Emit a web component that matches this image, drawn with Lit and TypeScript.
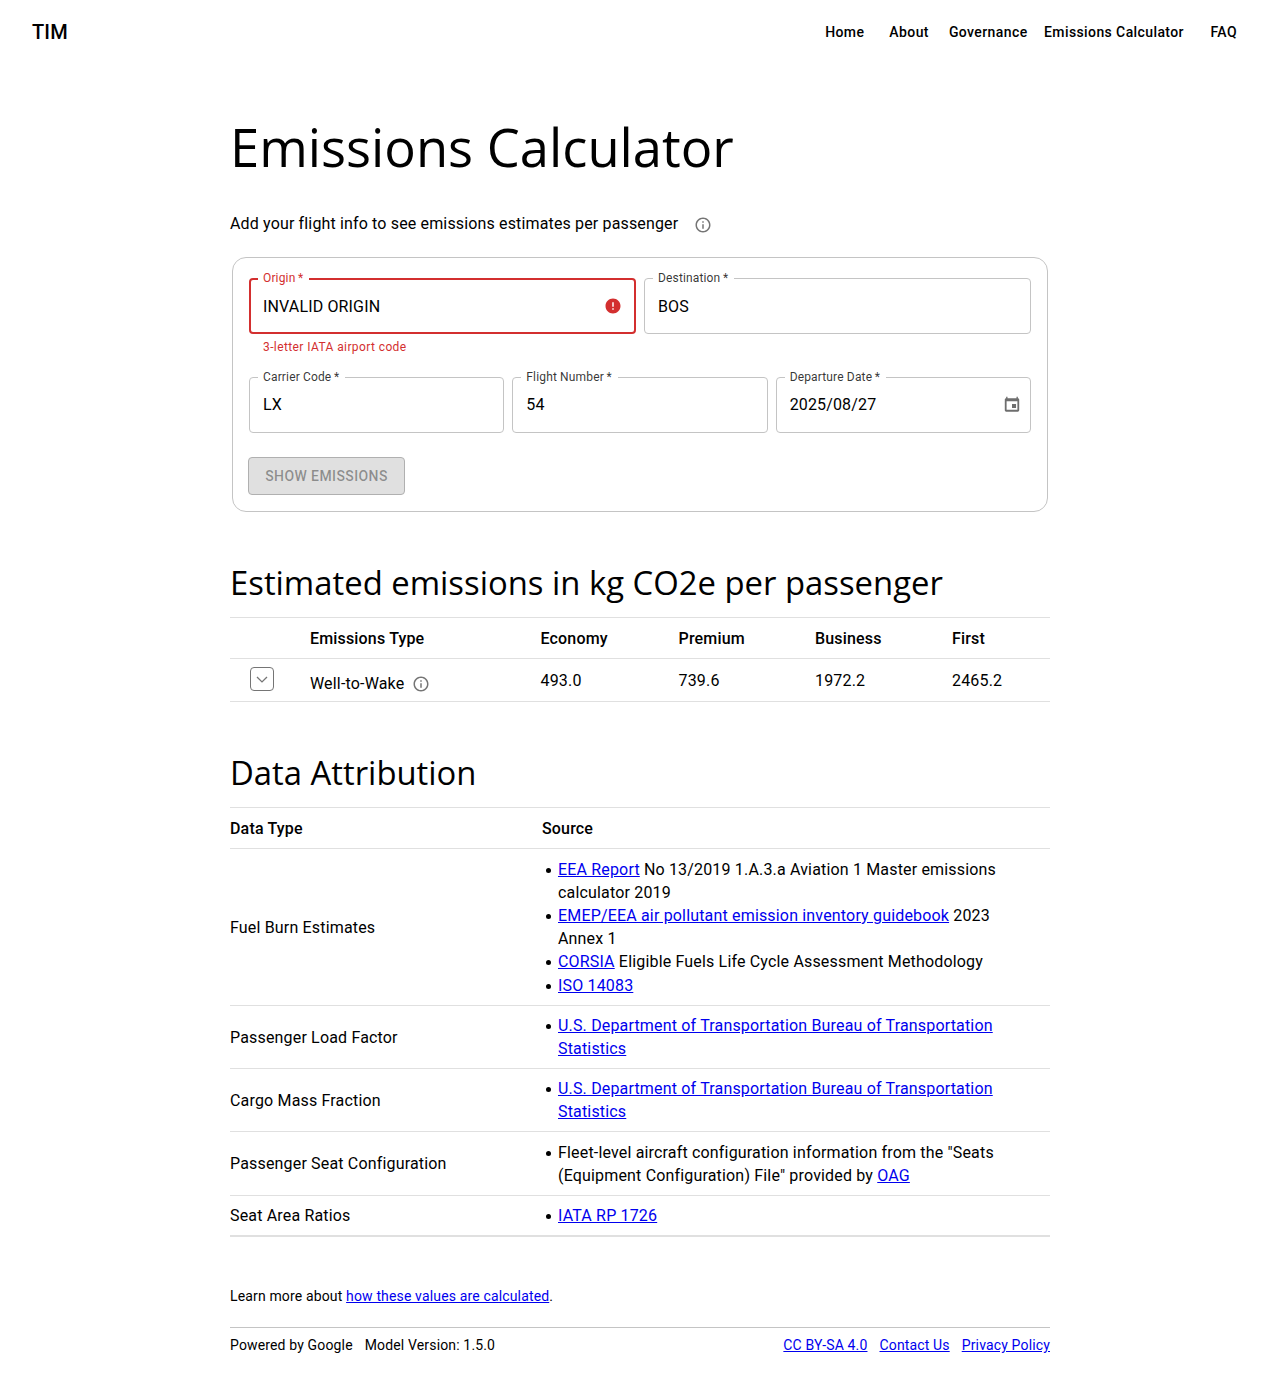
import {css, html, LitElement, svg} from "lit";
import {customElement} from "lit/decorators.js";

const INFO = svg`<path d="M11 7h2v2h-2zm0 4h2v6h-2zm1-9C6.48 2 2 6.48 2 12s4.48 10 10 10 10-4.48 10-10S17.52 2 12 2zm0 18c-4.41 0-8-3.59-8-8s3.59-8 8-8 8 3.59 8 8-3.59 8-8 8z"/>`;
const ERROR = svg`<path d="M12 2C6.48 2 2 6.48 2 12s4.48 10 10 10 10-4.48 10-10S17.52 2 12 2zm1 15h-2v-2h2v2zm0-4h-2V7h2v6z"/>`;
const CHEVRON = svg`<path d="M6 9.5l6 6 6-6" fill="none" stroke="currentColor" stroke-width="1.6"/>`;
// native date picker indicator, drawn on a 20 unit box
const CALENDAR = svg`<path fill-rule="evenodd" d="M15 2v1.5H5V2H3.5v1.5C2.6 3.5 2 4.2 2 5v12c0 .8.7 1.5 1.5 1.5h13c.8 0 1.5-.7 1.5-1.5V5c0-.8-.7-1.5-1.5-1.5V2H15zM16 7v9.5H4V7h12zM10 10v4.5h4.5V10H10z"/>`;

const NAV = ["Home", "About", "Governance", "Emissions Calculator", "FAQ"];

@customElement("app-root")
export class AppRoot extends LitElement {
  static styles = css`
    :host {
      display: block;
      min-height: 1380px;
      background: #fff;
      color: #000;
      font-family: Roboto, "Liberation Sans", sans-serif;
      font-size: 16px;
      letter-spacing: 0.15px;
    }

    a {
      color: #0000ee;
      text-decoration: underline;
    }

    svg {
      display: block;
      fill: currentColor;
    }

    header {
      height: 64px;
      display: flex;
      align-items: center;
      justify-content: space-between;
      padding: 0 43px 0 32px;
      box-sizing: border-box;
    }

    .logo {
      font-size: 20px;
      font-weight: 500;
      letter-spacing: 0.15px;
    }

    nav {
      display: flex;
      font-size: 14px;
      font-weight: 500;
      letter-spacing: 0.4px;
    }

    nav span:nth-child(2) { margin-left: 25px; }
    nav span:nth-child(3) { margin-left: 20px; }
    nav span:nth-child(4) { margin-left: 16.5px; }
    nav span:nth-child(5) { margin-left: 26.5px; }

    main {
      width: 820px;
      margin: 0 auto;
    }

    h1, h2 {
      font-family: "Open Sans", sans-serif;
      font-weight: 400;
      margin: 0;
      letter-spacing: 0;
    }

    h1 {
      font-size: 52.5px;
      line-height: 68px;
      margin-top: 49px;
    }

    h2 {
      font-size: 32.85px;
      line-height: 46px;
    }

    .intro {
      display: flex;
      align-items: center;
      height: 24px;
      margin-top: 30px;
    }

    .info {
      color: #757575;
      flex: none;
    }

    .intro .info {
      margin-left: 16px;
      margin-top: 4px;
    }

    .card {
      margin: 22px 2px 0;
      padding: 20px 16px 16px;
      border: 1px solid #c4c4c4;
      border-radius: 14px;
    }

    .row {
      display: grid;
      gap: 8px;
    }

    .two { grid-template-columns: 1fr 1fr; }
    .three { grid-template-columns: 1fr 1fr 1fr; }

    .field {
      position: relative;
      height: 56px;
      box-sizing: border-box;
      display: flex;
      align-items: center;
      justify-content: space-between;
      padding: 0 13px;
      border: 1px solid #c4c4c4;
      border-radius: 4px;
    }

    .field label {
      position: absolute;
      top: -8px;
      left: 8px;
      padding: 0 6px 0 5px;
      background: #fff;
      font-size: 12px;
      line-height: 14px;
      letter-spacing: 0.15px;
      color: rgba(0, 0, 0, 0.8);
    }

    .field.invalid {
      border: 2px solid #d32f2f;
      padding: 0 12px;
    }

    .field.invalid label {
      top: -9px;
      left: 7px;
      color: #d32f2f;
    }

    .field.bottom .value {
      padding-bottom: 1px;
    }

    .field .err {
      color: #d32f2f;
    }

    .field .cal {
      color: #6e6e6e;
      margin: -2px -4px 0 0;
    }

    .helper {
      height: 43px;
      padding: 6px 0 0 14px;
      box-sizing: border-box;
      font-size: 12px;
      line-height: 14px;
      letter-spacing: 0.4px;
      color: #d32f2f;
    }

    .btn {
      display: inline-block;
      box-sizing: border-box;
      width: 157px;
      height: 38px;
      margin: 24px 0 0 -1px;
      border: 1px solid #b0b0b0;
      border-radius: 4px;
      background: #e0e0e0;
      color: rgba(0, 0, 0, 0.38);
      font-size: 14px;
      font-weight: 500;
      letter-spacing: 0.4px;
      line-height: 36px;
      text-align: center;
    }

    table {
      width: 820px;
      table-layout: fixed;
      border-collapse: collapse;
    }

    th, td {
      padding: 0;
      text-align: left;
      font-weight: 400;
      letter-spacing: 0.17px;
      border-bottom: 1px solid #e0e0e0;
    }

    thead th {
      font-weight: 500;
      height: 40px;
      border-top: 1px solid #e0e0e0;
    }

    .emissions,
    .attribution {
      margin-top: 11px;
    }

    .emissions-heading {
      margin-top: 48px;
    }

    .attribution-heading {
      margin-top: 48px;
    }

    .expand {
      width: 22px;
      height: 22px;
      margin: 0 0 2px 20px;
      border: 1px solid #757575;
      border-radius: 4px;
      display: flex;
      align-items: center;
      justify-content: center;
      color: #757575;
    }

    .emissions tbody td {
      height: 42px;
    }

    .type {
      display: flex;
      align-items: center;
      padding-top: 6px;
    }

    .type .info {
      margin-left: 8px;
      margin-top: 2px;
    }

    ul {
      margin: 0;
      padding: 0 0 0 16px;
      list-style: none;
    }

    li {
      position: relative;
      line-height: 23px;
    }

    /* drawn by hand, the native marker sits too far left */
    li::before {
      content: "";
      position: absolute;
      left: -12.5px;
      top: 9.5px;
      width: 5px;
      height: 5px;
      border-radius: 50%;
      background: #000;
    }

    li.last {
      margin-top: 1px;
    }

    .attribution tbody tr:last-child td {
      border-bottom: 2px solid #e0e0e0;
    }

    td.src {
      padding: 8px 40px 8px 0;
    }

    td.src.first,
    td.src.tall {
      padding-top: 9px;
    }

    .learn {
      margin: 49px 0 0;
      font-size: 14px;
      line-height: 20px;
      letter-spacing: 0.15px;
    }

    footer {
      margin-top: 21px;
      padding-top: 7px;
      border-top: 1px solid #c4c4c4;
      display: flex;
      justify-content: space-between;
      font-size: 14px;
      line-height: 20px;
      letter-spacing: 0.15px;
    }

    footer div {
      display: flex;
      gap: 12px;
    }
  `;

  private icon(body: unknown, size: number, cls: string, box = 24) {
    return html`<svg class=${cls} width=${size} height=${size} viewBox="0 0 ${box} ${box}">${body}</svg>`;
  }

  private field(label: string, value: unknown, trailing: unknown = "", cls = "") {
    return html`
      <div class="field ${cls}">
        <label>${label}\u2009*</label>
        <span class="value">${value}</span>
        ${trailing}
      </div>
    `;
  }

  render() {
    return html`
      <header>
        <span class="logo">TIM</span>
        <nav>${NAV.map((n) => html`<span>${n}</span>`)}</nav>
      </header>

      <main>
        <h1>Emissions Calculator</h1>
        <div class="intro">
          Add your flight info to see emissions estimates per passenger
          ${this.icon(INFO, 18, "info")}
        </div>

        <section class="card">
          <div class="row two">
            ${this.field("Origin", "INVALID ORIGIN", this.icon(ERROR, 18, "err"), "invalid")}
            ${this.field("Destination", "BOS")}
          </div>
          <div class="helper">3-letter IATA airport code</div>
          <div class="row three">
            ${this.field("Carrier Code", "LX", "", "bottom")}
            ${this.field("Flight Number", "54", "", "bottom")}
            ${this.field("Departure Date", "2025/08/27", this.icon(CALENDAR, 18, "cal", 20), "bottom")}
          </div>
          <div class="btn">SHOW EMISSIONS</div>
        </section>

        <h2 class="emissions-heading">Estimated emissions in kg CO2e per passenger</h2>
        <table class="emissions">
          <colgroup>
            <col style="width: 80px" />
            <col style="width: 230.5px" />
            <col style="width: 138px" />
            <col style="width: 136.5px" />
            <col style="width: 137px" />
            <col style="width: 98px" />
          </colgroup>
          <thead>
            <tr>
              <th></th>
              <th>Emissions Type</th>
              <th>Economy</th>
              <th>Premium</th>
              <th>Business</th>
              <th>First</th>
            </tr>
          </thead>
          <tbody>
            <tr>
              <td><div class="expand">${this.icon(CHEVRON, 20, "")}</div></td>
              <td><div class="type">Well-to-Wake ${this.icon(INFO, 18, "info")}</div></td>
              <td>493.0</td>
              <td>739.6</td>
              <td>1972.2</td>
              <td>2465.2</td>
            </tr>
          </tbody>
        </table>

        <h2 class="attribution-heading">Data Attribution</h2>
        <table class="attribution">
          <colgroup>
            <col style="width: 312px" />
            <col style="width: 508px" />
          </colgroup>
          <thead>
            <tr>
              <th>Data Type</th>
              <th>Source</th>
            </tr>
          </thead>
          <tbody>
            <tr>
              <td>Fuel Burn Estimates</td>
              <td class="src first">
                <ul>
                  <li><a href="#">EEA Report</a> No 13/2019 1.A.3.a Aviation 1 Master emissions calculator 2019</li>
                  <li><a href="#">EMEP/EEA air pollutant emission inventory guidebook</a> 2023 Annex 1</li>
                  <li><a href="#">CORSIA</a> Eligible Fuels Life Cycle Assessment Methodology</li>
                  <li class="last"><a href="#">ISO 14083</a></li>
                </ul>
              </td>
            </tr>
            <tr>
              <td>Passenger Load Factor</td>
              <td class="src">
                <ul><li><a href="#">U.S. Department of Transportation Bureau of Transportation Statistics</a></li></ul>
              </td>
            </tr>
            <tr>
              <td>Cargo Mass Fraction</td>
              <td class="src">
                <ul><li><a href="#">U.S. Department of Transportation Bureau of Transportation Statistics</a></li></ul>
              </td>
            </tr>
            <tr>
              <td>Passenger Seat Configuration</td>
              <td class="src tall">
                <ul><li>Fleet-level aircraft configuration information from the "Seats (Equipment Configuration) File" provided by <a href="#">OAG</a></li></ul>
              </td>
            </tr>
            <tr>
              <td>Seat Area Ratios</td>
              <td class="src">
                <ul><li><a href="#">IATA RP 1726</a></li></ul>
              </td>
            </tr>
          </tbody>
        </table>

        <p class="learn">
          Learn more about <a href="#">how these values are calculated</a>.
        </p>
        <footer>
          <div><span>Powered by Google</span><span>Model Version: 1.5.0</span></div>
          <div>
            <a href="#">CC BY-SA 4.0</a>
            <a href="#">Contact Us</a>
            <a href="#">Privacy Policy</a>
          </div>
        </footer>
      </main>
    `;
  }
}
